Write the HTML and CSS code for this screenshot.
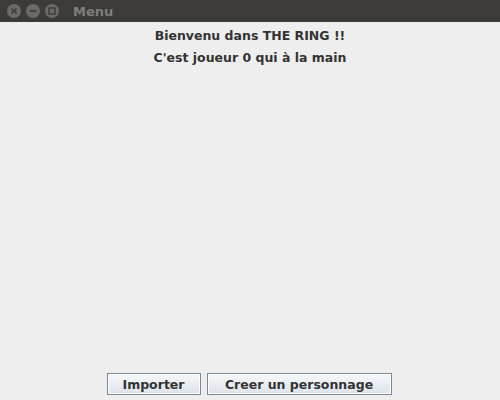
FILE: index.html
```html
<!DOCTYPE html>
<html>
<head>
<meta charset="utf-8">
<link rel="stylesheet" href="styles.css">
</head>
<body>
<div class="window">
  <div class="titlebar">
    <div class="controls">
      <span class="ctl"><svg width="14" height="14" viewBox="0 0 14 14"><path d="M4.5 4.5l5 5M9.5 4.5l-5 5" stroke="#3c3b37" stroke-width="1.6"/></svg></span>
      <span class="ctl"><svg width="14" height="14" viewBox="0 0 14 14"><path d="M3.5 7h7" stroke="#3c3b37" stroke-width="1.6"/></svg></span>
      <span class="ctl"><svg width="14" height="14" viewBox="0 0 14 14"><rect x="4" y="4" width="6" height="6" fill="none" stroke="#3c3b37" stroke-width="1.4"/></svg></span>
    </div>
    <span class="title">Menu</span>
  </div>
  <div class="content">
    <div class="messages">
      <p class="line">Bienvenu dans THE RING !!</p>
      <p class="line">C'est joueur 0 qui à la main</p>
    </div>
    <div class="actions">
      <button class="btn btn-import">Importer</button>
      <button class="btn btn-create">Creer un personnage</button>
    </div>
  </div>
</div>
</body>
</html>
```
FILE: styles.css
```css
html, body {
  margin: 0;
  padding: 0;
  width: 500px;
  height: 400px;
  overflow: hidden;
  background: #eeeeee;
  font-family: "DejaVu Sans", sans-serif;
}
.window {
  display: flex;
  flex-direction: column;
  height: 400px;
}
.titlebar {
  height: 22px;
  background: #3c3b37;
  display: flex;
  align-items: center;
  padding-left: 7px;
  box-sizing: border-box;
}
.controls {
  display: flex;
  gap: 5px;
}
.ctl {
  width: 14px;
  height: 14px;
  border-radius: 50%;
  background: #6b6a65;
  display: flex;
}
.title {
  margin-left: 14px;
  color: #807f7a;
  font-weight: bold;
  font-size: 13px;
}
.content {
  flex: 1;
  display: flex;
  flex-direction: column;
  justify-content: space-between;
}
.messages {
  display: flex;
  flex-direction: column;
  align-items: center;
  padding-top: 6px;
  gap: 6px;
}
.line {
  margin: 0;
  font-size: 12.5px;
  font-weight: bold;
  color: #333333;
  line-height: 16px;
}
.actions {
  display: flex;
  justify-content: center;
  gap: 6px;
  padding-bottom: 5px;
  padding-right: 2px;
}
.btn {
  height: 22px;
  border: 1px solid #7a8a99;
  background: linear-gradient(#f6f8fa, #dde3ea);
  font-family: "DejaVu Sans", sans-serif;
  font-weight: bold;
  font-size: 12.5px;
  color: #333333;
  padding: 0;
  box-shadow: inset 0 0 0 1px #ffffff;
}
.btn-import { width: 94px; }
.btn-create { width: 185px; }
```
